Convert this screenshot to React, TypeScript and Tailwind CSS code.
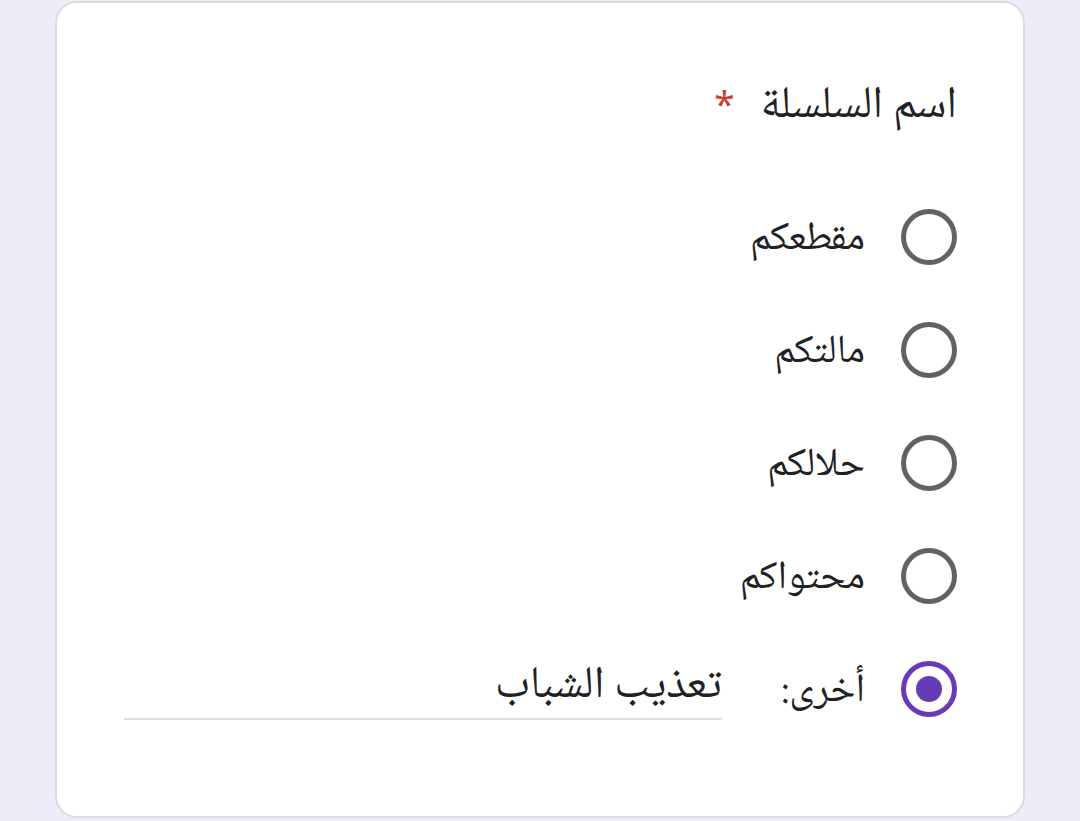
const options = ['مقطعكم', 'مالتكم', 'حلالكم', 'محتواكم'];

const Radio = ({ checked }: { checked?: boolean }) =>
  checked ? (
    <span className="flex h-[56px] w-[56px] shrink-0 items-center justify-center rounded-full border-[5px] border-[#673ab7]">
      <span className="h-[26px] w-[26px] rounded-full bg-[#673ab7]" />
    </span>
  ) : (
    <span className="h-[56px] w-[56px] shrink-0 rounded-full border-[5px] border-[#5f6368]" />
  );

export default function App() {
  return (
    <div
      dir="rtl"
      className="min-h-[821px] bg-[#efebf7] px-[55px] pt-px"
      style={{ fontFamily: '"Noto Naskh Arabic", "Noto Sans Arabic", "Noto Sans", "DejaVu Sans", sans-serif' }}
    >
      <div className="h-[817px] rounded-[22px] border-2 border-[#dadce0] bg-white pb-[72px] pr-[66px] pt-[81px]">
        <div className="flex h-[48px] items-center gap-[26px] text-[45px] leading-[48px] text-[#202124]">
          <span>اسم السلسلة</span>
          <span className="pb-[10px] font-['Noto_Sans',sans-serif] text-[37px] text-[#c9402e]">*</span>
        </div>

        <div className="mt-[48px]">
          {options.map((label) => (
            <div key={label} className="flex h-[113px] items-center gap-[36px]">
              <Radio />
              <span className="pt-[6px] text-[40px] leading-[48px] text-[#202124]">{label}</span>
            </div>
          ))}
          <div className="flex h-[113px] items-center gap-[36px]">
            <Radio checked />
            <span className="pt-[6px] text-[40px] leading-[48px] text-[#202124]">أخرى:</span>
            <div className="mr-[23px] mt-[6px] w-[598px] border-b-2 border-[#e0e0e0] pb-[6px] text-[45px] leading-[48px] text-[#202124]">
              تعذيب الشباب
            </div>
          </div>
        </div>
      </div>
    </div>
  );
}
